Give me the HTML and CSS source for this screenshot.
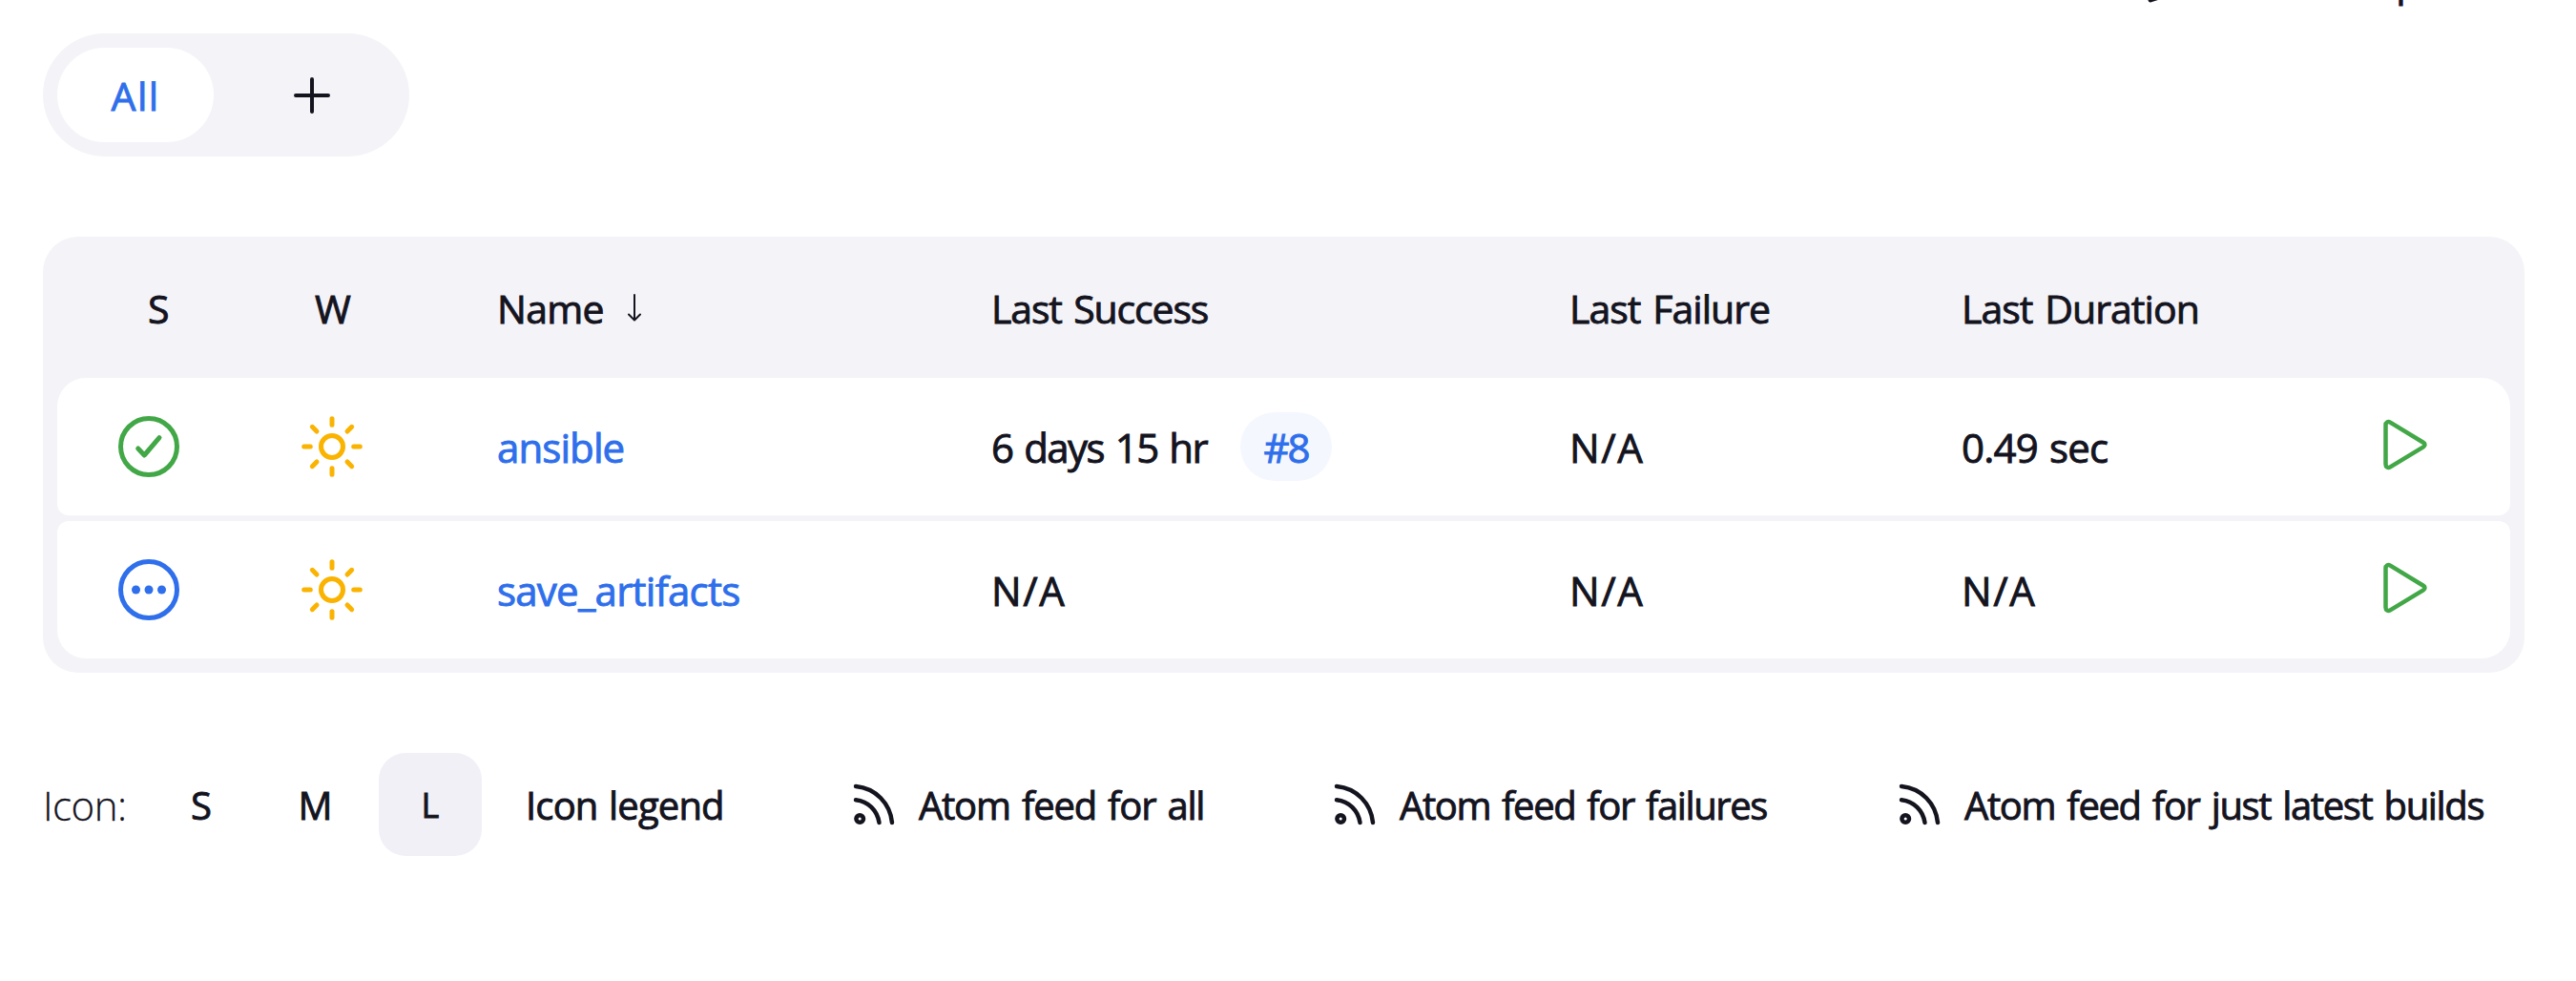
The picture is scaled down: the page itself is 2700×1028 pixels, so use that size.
FILE: index.html
```html
<!DOCTYPE html>
<html lang="en">
<head>
<meta charset="utf-8">
<title>Dashboard</title>
<link rel="stylesheet" href="styles.css">
</head>
<body>
<svg class="sprite" aria-hidden="true">
  <symbol id="ok" viewBox="0 0 64 64"><circle cx="32" cy="32" r="29.5"/><path d="M20.7 34l6.6 7L43 22.700"/></symbol>
  <symbol id="pending" viewBox="0 0 64 64"><circle cx="32" cy="32" r="29.5"/><g fill="currentColor" stroke="none"><circle cx="18.500" cy="32" r="4.500"/><circle cx="32" cy="32" r="4.500"/><circle cx="45.500" cy="32" r="4.500"/></g></symbol>
  <symbol id="sun" viewBox="0 0 64 64"><circle cx="32" cy="32" r="11.500"/><path d="M32 2.700v6.600M32 54.700v6.600M2.700 32h6.600M54.700 32h6.600M11.300 11.300l4.700 4.700M48 48l4.700 4.700M52.700 11.300L48 16M16 48l-4.700 4.700"/></symbol>
  <symbol id="play" viewBox="0 0 48 54"><path d="M3.500 6.500v41c0 3 2.500 4.300 4.800 2.800L43 29.300c2-1.200 2-3.400 0-4.600L8.300 3.700C6 2.200 3.500 3.500 3.500 6.500z"/></symbol>
  <symbol id="feed" viewBox="0 0 44 44"><path d="M3 3c21 2 36 18 38 38M3 17.200c13 1.500 22.500 11 24.500 23.800"/><circle cx="7.200" cy="37" r="3.800"/></symbol>
</svg>
<header class="appbar">
  <svg class="pencil" viewBox="0 0 46 46"><path d="M3 43l4-12L34 4l8 8-27 27z"/></svg>
  <span>Add description</span>
</header>
<main>
  <nav class="tabs">
    <a class="tab active">All</a>
    <a class="tab add"><svg viewBox="0 0 38 38"><path d="M19 2v34M2 19h34"/></svg></a>
  </nav>
  <section class="table">
    <div class="row head">
      <span class="status">S</span><span class="weather">W</span>
      <span class="name">Name<svg class="arrow" viewBox="0 0 14 28"><path d="M7 0v26M1 20.500l6 6 6-6"/></svg></span>
      <span class="success">Last Success</span><span class="failure">Last Failure</span><span class="duration">Last Duration</span>
    </div>
    <div class="row first">
      <svg class="icon green"><use href="#ok"/></svg>
      <svg class="icon sun"><use href="#sun"/></svg>
      <a class="link">ansible</a>
      <span class="when"><span class="age">6 days 15 hr</span><a class="badge">#8</a></span>
      <span class="na">N/A</span><span class="time">0.49 sec</span>
      <svg class="play"><use href="#play"/></svg>
    </div>
    <div class="row last">
      <svg class="icon blue"><use href="#pending"/></svg>
      <svg class="icon sun"><use href="#sun"/></svg>
      <a class="link save">save_artifacts</a>
      <span class="na">N/A</span><span class="na">N/A</span><span class="na">N/A</span>
      <svg class="play"><use href="#play"/></svg>
    </div>
  </section>
  <footer>
    <span class="label">Icon:</span>
    <div class="sizes"><a class="size">S</a><a class="size">M</a><a class="size chosen">L</a></div>
    <a class="legend">Icon legend</a>
    <a class="feed all"><svg><use href="#feed"/></svg><span>Atom feed for all</span></a>
    <a class="feed failures"><svg><use href="#feed"/></svg><span>Atom feed for failures</span></a>
    <a class="feed latest"><svg><use href="#feed"/></svg><span>Atom feed for just latest builds</span></a>
  </footer>
</main>
</body>
</html>
```
FILE: styles.css
```css
* { box-sizing: border-box; }
body {
  margin: 0;
  height: 1028px;
  overflow: hidden;
  background: #fff;
  color: #14141f;
  font: 500 41px/56px "Open Sans", "Noto Sans", sans-serif;
  -webkit-text-stroke: 0.9px currentColor;
  white-space: nowrap;
}
svg { display: block; fill: none; stroke: currentColor; stroke-width: 5; stroke-linecap: round; stroke-linejoin: round; }
.sprite { display: none; }

.appbar { display: flex; gap: 13px; height: 35px; padding-left: 2251px; overflow: hidden; }
.appbar span { margin-top: -48px; }
.pencil { flex: none; width: 46px; height: 46px; margin-top: -43px; }

main { padding: 0 54px 0 45px; }
.tabs { display: flex; width: 384px; height: 129px; padding: 15px; border-radius: 65px; background: #f4f3f8; }
.tab { display: flex; flex: none; align-items: center; justify-content: center; width: 164px; border-radius: 50px; }
.active { padding-top: 1px; background: #fff; color: #2f6feb; letter-spacing: 1.4px; }
.add { width: 206px; }
.add svg { width: 38px; height: 38px; stroke-width: 4; }

.table { margin-top: 84px; height: 457px; padding: 0 15px 15px; border-radius: 37px; background: #f4f3f8; }
.row {
  display: grid;
  grid-template-columns: 160px 237px 518px 606px 411px 439px 1fr;
  align-items: center;
  height: 144px;
  padding-left: 64px;
  background: #fff;
  font-size: 42px;
}
.row > span, .row > a { padding-top: 2px; }
.head { height: 148px; background: none; font-size: 41px; }
.first { border-radius: 30px 30px 12px 12px; }
.last { margin-top: 6px; border-radius: 12px 12px 30px 30px; }
.head .status { padding-left: 31px; }
.head .weather { padding-left: 46px; }
.name { display: flex; align-items: center; gap: 25px; letter-spacing: -0.7px; }
.arrow { width: 14px; height: 28px; stroke-width: 2; overflow: visible; }
.success { letter-spacing: -1.15px; word-spacing: 3px; }
.failure, .duration { letter-spacing: -0.95px; word-spacing: 3px; }
.icon { width: 64px; height: 64px; }
.icon.sun { margin-left: 32px; color: #fab300; }
.green, .play { color: #42a746; }
.blue { color: #2f6feb; }
.link { color: #2f6feb; letter-spacing: -0.9px; }
.save { letter-spacing: -0.75px; }
.when { display: flex; align-items: center; }
.age { width: 261px; letter-spacing: -1.6px; word-spacing: 2.5px; }
.badge { width: 96px; height: 72px; margin-top: -2px; padding-top: 1px; border-radius: 36px; background: #f4f7fe; color: #2f6feb; line-height: 72px; text-align: center; letter-spacing: -2px; }
.na { letter-spacing: 1.6px; }
.time { letter-spacing: -0.8px; word-spacing: 2px; }
.play { width: 48px; height: 54px; margin: -4px 0 0 2px; stroke-width: 4.5; }

footer { display: flex; align-items: center; height: 108px; margin-top: 84px; font-size: 40px; }
footer span, .legend, .size { padding-top: 2px; }
.label { width: 113px; font-size: 42px; font-weight: 300; letter-spacing: -0.5px; -webkit-text-stroke-width: 0.3px; }
.sizes { display: grid; grid-template-columns: 106px 133px 108px; width: 347px; height: 108px; }
.size { display: flex; align-items: center; justify-content: center; }
.chosen { border-radius: 28px; background: #f2f0f7; font-size: 36px; }
.legend { width: 343px; padding-left: 46px; letter-spacing: -0.85px; word-spacing: 2px; }
.feed { display: flex; align-items: center; gap: 25px; word-spacing: 3px; }
.feed svg { flex: none; width: 44px; height: 44px; stroke-width: 4.500; }
.all { width: 504px; margin-left: 46px; letter-spacing: -1.22px; }
.failures { width: 592px; letter-spacing: -1.4px; }
.latest { letter-spacing: -1.35px; }
```
